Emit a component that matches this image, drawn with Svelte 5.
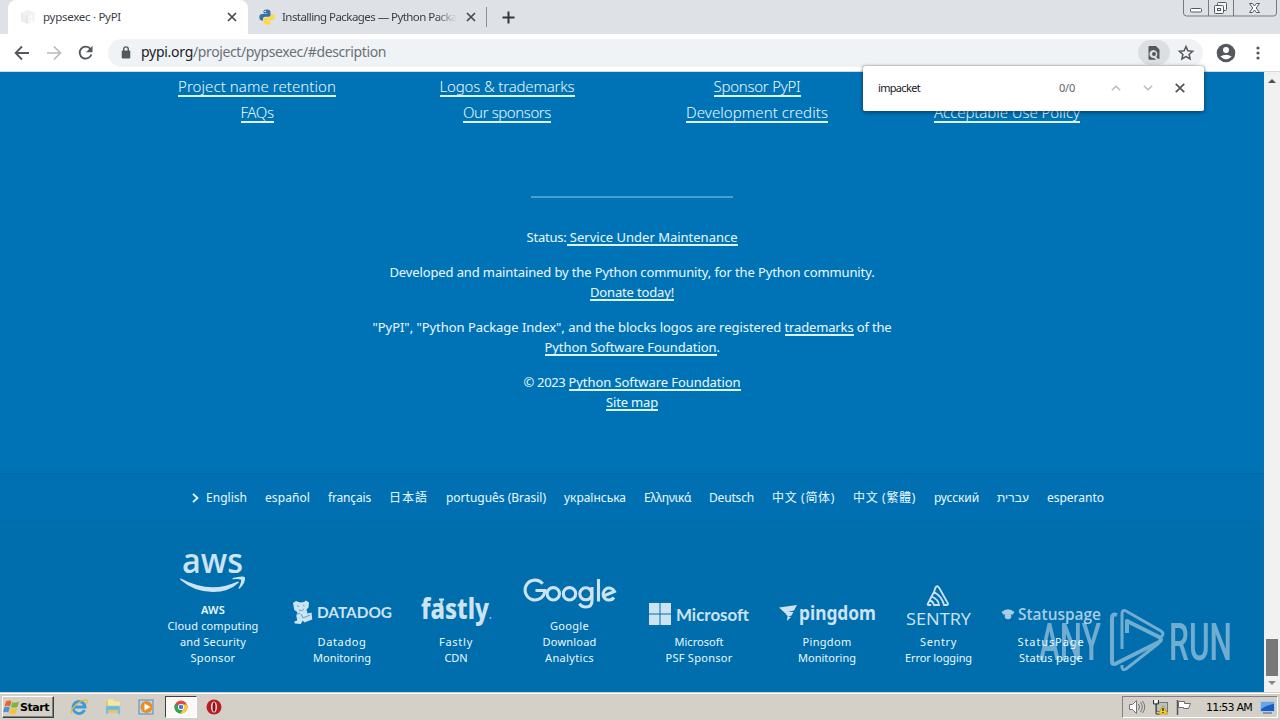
<script>
  const footerColumns = [
    [['Project name retention', 158], ['FAQs', 33]],
    [['Logos & trademarks', 135], ['Our sponsors', 88]],
    [['Sponsor PyPI', 87], ['Development credits', 142]],
    [null, ['Acceptable Use Policy', 146]]
  ];
  const languages = [
    ['English', 41], ['español', 45], ['français', 43], ['日本語', 39], ['português (Brasil)', 100],
    ['українська', 62], ['Ελληνικά', 47], ['Deutsch', 45], ['中文 (简体)', 63], ['中文 (繁體)', 63],
    ['русский', 45], ['עברית', 32], ['esperanto', 57]
  ];
  const sponsors = [
    { id: 'aws', w: 92, gap: 0, lines: [['AWS', 24], ['Cloud computing', 91], ['and Security', 66], ['Sponsor', 45]] },
    { id: 'datadog', w: 100, gap: 33, lines: [['Datadog', 49], ['Monitoring', 58]] },
    { id: 'fastly', w: 70, gap: 29, lines: [['Fastly', 34], ['CDN', 23]] },
    { id: 'google', w: 91, gap: 33, lines: [['Google', 39], ['Download', 54], ['Analytics', 49]] },
    { id: 'microsoft', w: 100, gap: 34, lines: [['Microsoft', 49], ['PSF Sponsor', 67]] },
    { id: 'pingdom', w: 100, gap: 28, lines: [['Pingdom', 49], ['Monitoring', 58]] },
    { id: 'sentry', w: 67, gap: 28, lines: [['Sentry', 37], ['Error logging', 67]] },
    { id: 'statuspage', w: 100, gap: 29, lines: [['StatusPage', 67], ['Status page', 64]] }
  ];

  // Adjusts tracking so that a label occupies its nominal width.
  function fit(node, width) {
    const natural = node.getBoundingClientRect().width;
    const count = [...node.textContent].length;
    node.style.letterSpacing = (width - natural) / count + 'px';
  }
</script>

<div class="screen">
  <div class="tabs">
    <div class="tab active">
      <svg class="fav" width="16" height="16" viewBox="0 0 16 16"><path d="M1 4 8 1l7 3v8l-7 3-7-3z" fill="#f1f1f1"/><path d="m1 4 7 3v8l-7-3z" fill="#e9e9e9"/><path d="m8 7 7-3v8l-7 3z" fill="#f5f5f5"/><path d="M4 5.500v8M11.500 5.500v8" stroke="#fff" stroke-width=".7"/></svg>
      <span class="label" use:fit={78}>pypsexec · PyPI</span>
      <svg class="x" width="10" height="10" viewBox="0 0 10 10"><path d="m1 1 8 8M9 1 1 9" stroke="#45484c" stroke-width="1.700"/></svg>
    </div>
    <div class="tab idle">
      <svg class="fav" width="16" height="16" viewBox="0 0 16 16"><path d="M8 .5C5 .5 4.500 1.500 4.500 3v1.500H8.500V5H3C1.200 5 .3 6.300.3 8.200S1.200 11.500 2.800 11.500H4V9.700C4 8.500 5 7.700 6.200 7.700h3.600c1 0 1.700-.8 1.700-1.700V3C11.500 1.400 10.300.5 8 .5z" fill="#3872a5"/><path d="M8 15.700c3 0 3.600-1 3.600-2.400v-1.600h-4v-.5H13c1.800 0 2.700-1.300 2.700-3.200s-1-3.200-2.500-3.200H12v1.700c0 1.300-1 2-2.200 2H6.200c-1 0-1.700.8-1.700 1.700v3c0 1.600 1.200 2.500 3.500 2.500z" fill="#ffd84a"/><circle cx="6.200" cy="2.500" r=".8" fill="#fff"/></svg>
      <span class="label long"><span class="run" use:fit={175}>Installing Packages — Python Packa</span></span>
      <svg class="x" width="10" height="10" viewBox="0 0 10 10"><path d="m1 1 8 8M9 1 1 9" stroke="#45484c" stroke-width="1.700"/></svg>
    </div>
    <i class="sep"></i>
    <svg class="plus" width="13" height="13" viewBox="0 0 13 13"><path d="M6.500.5v12M.5 6.500h12" stroke="#33373b" stroke-width="2"/></svg>
    <svg class="wctl" width="94" height="17" viewBox="0 0 94 17" fill="none" stroke="#777b80">
      <path d="M.5 0v13q0 3 3 3h87q3 0 3-3V0M25.500 0v16M50.500 0v16"/>
      <rect x="7.500" y="8.500" width="11" height="3.500" rx="1" fill="#fff" stroke="#55595e"/>
      <g fill="#f5f6f8" stroke="#55595e"><rect x="34.500" y="2.500" width="9" height="8" rx="1"/><rect x="31.500" y="5.500" width="9" height="8" rx="1"/><rect x="34.500" y="8.500" width="3" height="2"/></g>
      <path d="M66.500 3.500h3l2 2.500 2-2.500h3l-3.300 4.500 3.300 4.500h-3l-2-2.500-2 2.500h-3L69.800 8z" fill="#fff" stroke="#55595e"/>
    </svg>
  </div>

  <div class="toolbar">
    <svg width="16" height="16" viewBox="0 0 16 16" fill="none" stroke="#54585d" stroke-width="1.800"><path d="M15 8H2M8 1.500 1.600 8 8 14.500"/></svg>
    <svg width="16" height="16" viewBox="0 0 16 16" fill="none" stroke="#b9bbbe" stroke-width="1.700"><path d="M1 8h13M8 1.500 14.400 8 8 14.500"/></svg>
    <svg width="16" height="16" viewBox="0 0 16 16"><path d="M13.400 9.500A6 6 0 1 1 12.500 4" fill="none" stroke="#54585d" stroke-width="1.900"/><path d="M14.500.8v6.500H8z" fill="#54585d"/></svg>
    <div class="omnibox">
      <svg class="lock" width="10" height="13" viewBox="0 0 10 13"><rect x=".7" y="4.500" width="8.600" height="8" rx="1" fill="#55595e"/><path d="M2.700 5V3.200a2.300 2.300 0 0 1 4.600 0V5" fill="none" stroke="#55595e" stroke-width="1.400"/></svg>
      <span class="host" use:fit={52}>pypi.org</span><span class="path" use:fit={193}>/project/pypsexec/#description</span>
      <span class="pill"><svg width="12" height="14" viewBox="0 0 12 14"><path d="M1.500 0H8l3.500 3.500v9l-1 .8-2.300-2.400A4 4 0 1 0 6 12l2.300 1.800H1.500Q.5 13.800.5 13V1q0-1 1-1z" fill="#54585d"/><circle cx="6" cy="8" r="2" fill="#54585d"/></svg></span>
      <svg class="star" width="16" height="16" viewBox="0 0 16 16"><path d="m8 1.500 1.900 4.300 4.700.5-3.500 3.100 1 4.600L8 11.600 3.900 14l1-4.600L1.400 6.300l4.700-.5z" fill="none" stroke="#54585d" stroke-width="1.500"/></svg>
    </div>
    <svg class="avatar" width="20" height="20" viewBox="0 0 20 20"><circle cx="10" cy="10" r="9.300" fill="#54585d"/><circle cx="10" cy="7" r="3" fill="#fff"/><path d="M4.300 13.600q5.700-3.800 11.400 0Q10 19 4.300 13.600z" fill="#fff"/></svg>
    <svg class="dots" width="4" height="14" viewBox="0 0 4 14" fill="#54585d"><circle cx="2" cy="2" r="1.600"/><circle cx="2" cy="7" r="1.600"/><circle cx="2" cy="12" r="1.600"/></svg>
  </div>

  <div class="view">
    <main>
      <section class="links">
        {#each footerColumns as col}
          <div class="col">
            {#each col as item}
              <div class="row">{#if item}<a href="#top" use:fit={item[1]}>{item[0]}</a>{/if}</div>
            {/each}
          </div>
        {/each}
      </section>
      <hr />
      <section class="legal">
        <p><span use:fit={40}>Status:</span><a href="#top" class="sp" use:fit={171}>&nbsp;Service Under Maintenance</a></p>
        <p><span use:fit={485}>Developed and maintained by the Python community, for the Python community.</span><br /><a href="#top" use:fit={84}>Donate today!</a></p>
        <p><span use:fit={412}>"PyPI", "Python Package Index", and the blocks logos are registered&nbsp;</span><a href="#top" use:fit={69}>trademarks</a><span use:fit={38}>&nbsp;of the</span><br /><a href="#top" use:fit={172}>Python Software Foundation</a><span use:fit={3}>.</span></p>
        <p><span use:fit={45}>© 2023&nbsp;</span><a href="#top" use:fit={172}>Python Software Foundation</a><br /><a href="#top" use:fit={52}>Site map</a></p>
      </section>
      <section class="langs">
        <svg width="7" height="10" viewBox="0 0 7 10"><path d="m1 .8 4.500 4.200L1 9.200" fill="none" stroke="#e8fbff" stroke-width="1.800"/></svg>
        {#each languages as [name, width]}
          <span class="lang" style:width="{width}px"><span class="run" use:fit={width}>{name}</span></span>
        {/each}
      </section>
      <section class="sponsors">
        {#each sponsors as s}
          <div class="sponsor" style:width="{s.w}px" style:margin-left="{s.gap}px">
            {#if s.id === 'aws'}
              <svg width="66" height="42" viewBox="0 0 66 42" fill="#cce3f2"><text x="2" y="22" font-size="34" font-weight="600" font-family="Open Sans" textLength="61" lengthAdjust="spacingAndGlyphs">aws</text><path d="M.8 27.500Q30 43 56.500 31q2-1 2.400.4Q49 40.800 33 41 14 40.800.3 28.700q-.5-1.500.5-1.200zM52.500 27q11.500-2.800 12.500-.6.700 5.200-5.400 11.200-1.500.8-1-.6 3.600-7.500 2.200-8.500-2-.8-8.200-.2z"/></svg>
            {:else if s.id === 'datadog'}
              <svg width="100" height="26" viewBox="0 0 100 26"><path d="m1 4 3-2 4 1.500 4-.5 2-1.500 3 2-.5 5-2 2 1 4 4-1 .8 7-8 3-1.500-2-2 3.500-6-.5-.5-2 3-1-1-4.500 1-4-3-2z" fill="#cce3f2"/><path d="m5 6.500 2 1m4-1.500 1.500 1M7 11q3 2 5-1M9 15l2 4 7-3M5 15l3-1" stroke="#3b8fc4" stroke-width=".8" fill="none"/><text x="25" y="19" font-size="15.500" font-weight="700" font-family="Lato" textLength="75" lengthAdjust="spacingAndGlyphs" fill="#cce3f2">DATADOG</text></svg>
            {:else if s.id === 'fastly'}
              <svg width="71" height="29" viewBox="0 0 71 29"><text x="0" y="22.500" font-size="28" font-weight="800" font-family="Noto Sans" textLength="68" lengthAdjust="spacingAndGlyphs" fill="#cce3f2">fastly</text><path d="M18 3.500h5M20.500 4v4" stroke="#cce3f2" stroke-width="2.200"/><circle cx="69.500" cy="22" r="1" fill="#7cc4e9"/></svg>
            {:else if s.id === 'google'}
              <svg width="92" height="32" viewBox="0 0 92 32" fill="none" stroke="#cce3f2" stroke-width="3.100"><path d="M18.700 6.800A9.900 9.900 0 1 0 20.900 13.500H11.500"/><circle cx="29.300" cy="16.800" r="6.200"/><circle cx="45.500" cy="16.800" r="6.200"/><circle cx="61.800" cy="16.800" r="6"/><path d="M68 10v13.500q0 6.500-6.200 6.500-4.500 0-6.300-3.500M74.500 2v22.500M79.500 19l11-4.500A6 6 0 1 0 90 20.500"/></svg>
            {:else if s.id === 'microsoft'}
              <svg width="100" height="22" viewBox="0 0 100 22" fill="#cce3f2"><path d="M0 0h10.500v10.500H0zM11.500 0H22v10.500H11.500zM0 11.500h10.500V22H0zM11.500 11.500H22V22H11.500z"/><text x="27" y="17.500" font-size="17.500" font-weight="700" font-family="Lato" textLength="73" lengthAdjust="spacingAndGlyphs">Microsoft</text></svg>
            {:else if s.id === 'pingdom'}
              <svg width="100" height="24" viewBox="0 0 100 24" fill="#cce3f2"><path d="M2 6.500 20 4l-3 5.500-6 1.500h5.500l-2 3.500-3.500 1 3 .5-4 4 .5-5-2.500-3z"/><text x="22" y="18.500" font-size="20" font-weight="700" font-family="Noto Sans" textLength="77" lengthAdjust="spacingAndGlyphs">pingdom</text></svg>
            {:else if s.id === 'sentry'}
              <svg width="67" height="42" viewBox="0 0 67 42"><g transform="translate(-1 1.500)"><path d="M30 7.500 31.500 3q1.500-2.500 3.500 0l9 16q.3 1.500-1.500 1.500H40Q38 12 30 7.500L27.500 12q7 3 7.500 8.500h-5Q29 16.500 25.500 16l-1.800 3.500q-.3 1 1 1h2.500M27.500 12l-2 4" fill="none" stroke="#cce3f2" stroke-width="1.800"/></g><text x="1" y="41.500" font-size="17" font-family="Open Sans" textLength="65" lengthAdjust="spacingAndGlyphs" fill="#cce3f2">SENTRY</text></svg>
            {:else}
              <svg width="100" height="23" viewBox="0 0 100 23" fill="#a7cde6"><path d="M.5 10Q7 4.500 13.500 10l-2 2.800Q7 10.500 2.500 12.800z"/><circle cx="7" cy="14" r="3.300"/><text x="17" y="17.500" font-size="15.500" font-weight="600" font-family="Open Sans" textLength="83" lengthAdjust="spacingAndGlyphs">Statuspage</text></svg>
            {/if}
            <div class="caption {s.id}">
              {#each s.lines as [text, width]}<div><span use:fit={width}>{text}</span></div>{/each}
            </div>
          </div>
        {/each}
      </section>
    </main>
    <div class="scroll">
      <svg width="8" height="4" viewBox="0 0 8 4"><path d="M0 4 4 0l4 4z" fill="#505050"/></svg>
      <i></i>
      <svg width="8" height="4" viewBox="0 0 8 4"><path d="M0 0h8L4 4z" fill="#888"/></svg>
    </div>
  </div>

  <div class="taskbar">
    <div class="start">
      <svg width="17" height="16" viewBox="0 0 17 16"><path d="M3 2.500Q6 .5 8.500 2.500L7 7.500Q4.500 5.800 1.500 7.500z" fill="#e8652e"/><path d="M9.300 3Q12 4.500 16 2.500L14.500 8q-3.500 1.600-6.500 0z" fill="#7cb73c"/><path d="M1.300 8.500Q4 6.800 6.800 8.500L5.300 13.500Q3 12 0 13.500z" fill="#4c8ed8"/><path d="M7.700 9q3 1.700 6.500.2L12.600 14.500q-3.500 1.500-6.400-.4z" fill="#f6c330"/></svg>
      <b use:fit={29}>Start</b>
    </div>
    <div class="quick">
      <svg width="18" height="18" viewBox="0 0 18 18" fill="none"><path d="M14.500 12A6 6 0 1 1 15 9H4" stroke="#3b9bd9" stroke-width="2.800"/><path d="M2 15.500Q-.5 12 7 6T17 2.500q1 1-1 3.500" stroke="#e6b93c" stroke-width="1.300"/></svg>
      <svg width="18" height="18" viewBox="0 0 18 18"><path d="M2 3h5l1 2h7v10H2z" fill="#e6c75d"/><path d="M4 1.500h5l1 2h6v5H4z" fill="#f6e7a1"/><path d="M2 8h14v8h-2v-4H4v4H2z" fill="#74b6d9" stroke="#9accdf" stroke-width=".6"/></svg>
      <svg width="18" height="18" viewBox="0 0 18 18"><rect x="1" y="2" width="14" height="14" fill="#b8d8ee" stroke="#5689b4"/><circle cx="8.500" cy="9" r="6" fill="#f08b22"/><path d="m6.500 5.500 6 3.500-6 3.500z" fill="#fff"/></svg>
    </div>
    <div class="running">
      <svg width="14" height="14" viewBox="0 0 14 14"><circle cx="7" cy="7" r="6.500" fill="#e24a3a"/><path d="M1.200 4A6.500 6.500 0 0 0 6.500 13.500L9.800 8.500 7 7z" fill="#2fa452"/><path d="M13 4.500A6.500 6.500 0 0 1 6.500 13.500L9.700 8 7 4.500z" fill="#f8cb35"/><circle cx="7" cy="7" r="3.100" fill="#fff"/><circle cx="7" cy="7" r="2.300" fill="#427fe0"/></svg>
    </div>
    <svg class="opera" width="16" height="16" viewBox="0 0 16 16"><circle cx="8" cy="8" r="7.500" fill="#b81d25"/><ellipse cx="8" cy="8" rx="3" ry="5.500" fill="#f4e9e9"/><ellipse cx="8" cy="8" rx="1.500" ry="4.800" fill="#8e1119"/></svg>
    <div class="tray">
      <svg width="18" height="16" viewBox="0 0 18 16" fill="none" stroke="#73777b"><path d="M1.500 5.500h3l4-4v13l-4-4h-3z" fill="#fff"/><path d="M10.500 5q2 3 0 6M12.500 3q3.500 5 0 10M14.500 2q4.500 6 0 12"/></svg>
      <svg width="17" height="16" viewBox="0 0 17 16"><rect x="4.500" y="3.500" width="11" height="9" fill="#b9c2c6" stroke="#777"/><path d="M1.500 1v4h5V1M4 5v10h4" fill="none" stroke="#333"/><path d="M2.500 1v3h3V1" fill="#fff"/><path d="m11 6.500 5 8.500H6z" fill="#f5cf28" stroke="#a88812" stroke-width=".6"/><path d="M11 9v3M11 13v1" stroke="#222" stroke-width="1.300"/></svg>
      <svg width="17" height="16" viewBox="0 0 17 16"><path d="M2.500 1v15" stroke="#555" stroke-width="1.500"/><path d="M3.500 2.500h6v2h6l-2 5h-5v-1h-5z" fill="#fff" stroke="#6c6c6c"/></svg>
      <span class="clock" use:fit={46}>11:53 AM</span>
      <svg class="desk" width="15" height="14" viewBox="0 0 15 14"><rect x=".5" y="1.500" width="14" height="10" fill="#1b5ebd" stroke="#adc9ea"/><path d="M1 2h13v2Q7 5 1 9z" fill="#69a4e9"/><path d="M3 13h9" stroke="#345787"/></svg>
    </div>
  </div>

  <div class="find">
    <span class="query" use:fit={42}>impacket</span>
    <span class="count" use:fit={16}>0/0</span>
    <i></i>
    <svg width="10" height="6" viewBox="0 0 10 6"><path d="m.8 5.200 4.200-4 4.200 4" fill="none" stroke="#b8babd" stroke-width="1.400"/></svg>
    <svg width="10" height="6" viewBox="0 0 10 6"><path d="m.8.8 4.200 4 4.200-4" fill="none" stroke="#b8babd" stroke-width="1.400"/></svg>
    <svg width="10" height="10" viewBox="0 0 10 10"><path d="m.8.8 8.400 8.400M9.200.8.8 9.200" stroke="#54585d" stroke-width="1.800"/></svg>
  </div>

  <svg class="mark" width="194" height="66" viewBox="0 0 194 66">
    <g fill="#fff" font-family="Roboto" font-size="52" font-weight="500"><text x="0" y="53" textLength="62" lengthAdjust="spacingAndGlyphs">ANY</text><text x="130" y="53" textLength="63" lengthAdjust="spacingAndGlyphs">RUN</text></g>
    <g fill="none" stroke="#fff" stroke-width="4" stroke-linejoin="round"><path d="M78 8q-5-2-5 3v43q0 5 5 2l42-21q4-2.500 0-5L88 14v12"/><path d="M83 42V7q0-5 4-3l35 20q4 3 0 6M120 36 87 62q-4 2-4-2v-2" stroke-width="3"/></g>
  </svg>
</div>

<style>
  :global(body) { margin: 0; overflow: hidden; }
  .screen { position: relative; width: 1280px; height: 720px; display: flex; flex-direction: column; overflow: hidden; font-family: "Noto Sans", "Noto Sans CJK SC", sans-serif; background: #fff; }
  svg { display: block; flex: none; overflow: visible; }
  .screen span, a, b { white-space: nowrap; }
  .tabs { height: 34px; flex: none; background: #dee1e6; display: flex; align-items: center; }
  .tab { height: 34px; display: flex; align-items: center; box-sizing: border-box; font-size: 11.500px; color: #3c4043; }
  .active { width: 240px; margin-left: 8px; background: #fff; border-radius: 8px 8px 0 0; padding-left: 12px; }
  .label { margin-left: 7px; padding-bottom: 2px; }
  .active .x { margin-left: 106px; }
  .idle { padding-left: 11px; width: 238px; }
  .long { width: 175px; overflow: hidden; mask-image: linear-gradient(90deg, #000 88%, transparent); }
  .run { display: inline-block; }
  .idle .x { margin-left: 9px; }
  .sep { width: 1px; height: 20px; background: #8c9095; }
  .plus { margin-left: 15px; }
  .wctl { margin-left: auto; margin-right: 3px; align-self: flex-start; }
  .toolbar { height: 37px; flex: none; display: flex; align-items: center; gap: 16px; padding-left: 14px; box-sizing: content-box; border-bottom: 1px solid #d5d9dc; }
  .omnibox { width: 1095px; height: 28px; border-radius: 14px; background: #f0f3f5; display: flex; align-items: center; margin-left: -2px; box-sizing: border-box; padding-left: 13px; font-size: 14px; }
  .host, .path { padding-bottom: 2px; }
  .host { margin-left: 10px; color: #202124; }
  .path { color: #6b7075; }
  .pill { width: 32px; height: 25px; border-radius: 13px; background: #dcdfe1; display: flex; align-items: center; justify-content: center; margin-left: auto; }
  .star { margin: 0 9px 0 8px; }
  .avatar { margin-left: -3px; }
  .dots { margin-left: 4px; }
  .view { height: 620px; flex: none; display: flex; }
  main { width: 1264px; height: 620px; background: #0073b7; color: #e9faff; display: flex; flex-direction: column; }
  a { color: inherit; text-decoration: none; display: inline-block; border-bottom: 2px solid #d9f4ff; }
  .links { height: 124px; flex: none; display: grid; grid-template-columns: repeat(4, 250px); padding-left: 132px; font-size: 15px; font-weight: 300; }
  .col { padding-top: 4px; }
  .row { height: 26px; text-align: center; }
  .links a { line-height: 21px; height: 19px; }
  hr { width: 202px; height: 2px; flex: none; margin: 0 auto; border: 0; background: #4b9fcf; }
  .legal { height: 275px; flex: none; text-align: center; font-size: 13px; padding-top: 29px; box-sizing: border-box; }
  p { margin: 0 0 15px; line-height: 20px; height: 40px; }
  p:first-child { height: 20px; }
  .legal a { line-height: 16px; height: 15px; }
  .langs { height: 48px; flex: none; box-sizing: border-box; border-top: 1px solid #0068a8; background: #0070b3; display: flex; align-items: center; gap: 18px; padding-left: 192px; font-size: 12px; }
  .langs svg { margin-right: -11px; }
  .lang { line-height: 18px; height: 18px; }
  .sponsors { flex: 1; background: #006dad; display: flex; align-items: flex-end; padding: 0 0 26px 167px; }
  .sponsor { display: flex; flex-direction: column; align-items: center; flex: none; }
  .caption { margin-top: 9px; text-align: center; font-size: 11px; line-height: 16px; white-space: nowrap; }
  .aws div:first-child { font-weight: 600; }
  .scroll { width: 16px; background: #f1f1f1; display: flex; flex-direction: column; align-items: center; box-sizing: border-box; padding: 7px 0 7px; }
  .scroll i { width: 12px; height: 37px; margin: auto 0 5px; background: #787878; }
  .taskbar { height: 28px; flex: none; box-sizing: border-box; background: #d4d0c8; border-top: 1px solid #d4d0c8; box-shadow: inset 0 1px #fff; display: flex; align-items: center; padding: 1px 2px 0; }
  .start { width: 52px; height: 22px; box-sizing: border-box; border: 1px solid; border-color: #fff #404040 #404040 #fff; box-shadow: inset -1px -1px #808080; display: flex; align-items: center; font: 700 11px "DejaVu Sans", sans-serif; color: #000; }
  .quick { display: flex; gap: 16px; padding-left: 16px; }
  .running { width: 32px; height: 22px; box-sizing: border-box; margin-left: 9px; border: 1px solid; border-color: #404040 #fff #fff #404040; background: #faf9f7; display: flex; align-items: center; justify-content: center; }
  .opera { margin-left: 9px; }
  .tray { width: 156px; height: 22px; box-sizing: border-box; margin-left: auto; border: 1px solid; border-color: #808080 #fff #fff #808080; display: flex; align-items: center; padding-left: 5px; gap: 6px; }
  .clock { font: 11px "DejaVu Sans", sans-serif; margin-left: 8px; color: #000; }
  .desk { margin-left: 2px; }
  .find { position: absolute; left: 863px; top: 66px; width: 341px; height: 45px; box-sizing: border-box; background: #fff; border-radius: 2px; box-shadow: 0 0 1px #555, 0 1px 4px #0008; display: flex; align-items: center; padding: 0 0 2px 15px; font-size: 11px; color: #202124; }
  .count { margin-left: 139px; color: #5f6368; }
  .find i { width: 1px; height: 30px; margin: 0 20px 0 16px; background: #d8dadd; }
  .find svg { margin-right: 22px; }
  .mark { position: absolute; left: 1039px; top: 607px; opacity: .44; }
</style>
